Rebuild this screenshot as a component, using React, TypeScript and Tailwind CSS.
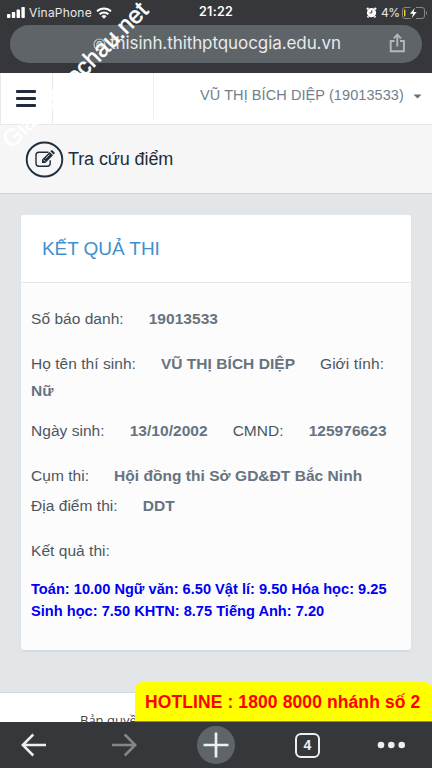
import type { ReactNode } from 'react'

const sans = "font-['Liberation_Sans',Arial,sans-serif]"

function Label({ children }: { children: ReactNode }) {
  return <span className="mr-[25px]">{children}</span>
}

function Value({ children }: { children: ReactNode }) {
  return <strong className="mr-[25px] font-bold text-[#67737f]">{children}</strong>
}

function StatusBar() {
  return (
    <div className="flex h-[25px] items-center pl-[7px] pr-[5px] text-[12px] text-[#e8eaed]">
      <div className="flex w-[192px] items-center">
        <svg width="18" height="11" viewBox="0 0 18 11" fill="#fff" aria-hidden="true">
          <rect x="0" y="7" width="3.4" height="4" rx=".8" />
          <rect x="4.8" y="5" width="3.4" height="6" rx=".8" />
          <rect x="9.6" y="2.5" width="3.4" height="8.5" rx=".8" />
          <rect x="14.4" y="0" width="3.4" height="11" rx=".8" />
        </svg>
        <span className="ml-1 w-[63px] whitespace-nowrap text-[12px] tracking-[0.2px]">VinaPhone</span>
        <svg className="ml-[4px]" width="16" height="12" viewBox="0 0 16 12" fill="none" stroke="#fff" strokeWidth="2" aria-hidden="true">
          <path d="M1 4.4a10 10 0 0 1 14 0M3.6 7.2a6.3 6.3 0 0 1 8.8 0" />
          <path d="M5.5 9.2a3.6 3.6 0 0 1 5 0L8 11.8z" fill="#fff" stroke="none" />
        </svg>
      </div>
      <span className="w-[36px] whitespace-nowrap text-[12.5px] font-semibold tracking-[0.3px] text-white">21:22</span>
      <div className="ml-auto flex items-center">
        <svg width="11" height="11" viewBox="0 0 11 11" aria-hidden="true">
          <circle cx="5.5" cy="5.7" r="4.6" fill="#fff" />
          <path d="M.8 2.3 2.5.8M10.2 2.3 8.5.8M2.5 9.3l-1 1.1M8.5 9.3l1 1.1" stroke="#fff" strokeWidth="1.8" />
          <path d="M5.8 3.2v2.7H3.6" fill="none" stroke="#36373b" strokeWidth="1" />
        </svg>
        <span className="ml-[4px] w-[21px] whitespace-nowrap text-[12px] tracking-[-0.4px]">4%</span>
        <svg width="25" height="12" viewBox="0 0 25 12" fill="none" aria-hidden="true">
          <path d="M8.5.5H3A2.5 2.5 0 0 0 .5 3v6A2.5 2.5 0 0 0 3 11.5h5.5M14 .5h6A2.5 2.5 0 0 1 22.5 3v6a2.5 2.5 0 0 1-2.5 2.5h-6" stroke="#85878a" />
          <rect x="2" y="2.5" width="1.4" height="7" rx=".7" fill="#f2d22e" />
          <path d="M12.8.8 8 6.8h3.1L9.7 11.200l5-6.200h-3.100z" fill="#fff" />
          <path d="M24 4v4a2.300 2.300 0 0 0 0-4" fill="#85878a" />
        </svg>
      </div>
    </div>
  )
}

function AddressBar() {
  return (
    <div className="mx-[10px] flex h-[38px] items-center rounded-full bg-[#5e6468] pl-[83px] pr-[16px]">
      <svg width="13" height="13" viewBox="0 0 13 13" fill="none" stroke="#c6c9cb" strokeWidth="1.2" aria-hidden="true">
        <circle cx="6.5" cy="6.5" r="5.5" />
        <path d="M4 5h5v4H4zM5 5V3.5h3V5" />
      </svg>
      <span className="ml-[4px] whitespace-nowrap text-[17px] tracking-[-0.08px] text-[#e8eaed]">thisinh.thithptquocgia.edu.vn</span>
      <svg className="ml-auto mb-[3px]" width="17" height="20" viewBox="0 0 17 20" fill="none" stroke="#b5b8ba" strokeWidth="1.9" aria-hidden="true">
        <path d="M5.5 8H1.7v10.2h13.2V8H11M8.3 13.5V1.8M4.7 5.3l3.6-3.6 3.6 3.6" />
      </svg>
    </div>
  )
}

function SiteHeader() {
  return (
    <div className="flex h-[52px] shrink-0 border-b border-[#e7e8e9] bg-white">
      <div className="flex w-[53px] flex-col justify-center gap-[4px] border-x border-[#e7e9eb] pl-[15px] pb-px">
        <span className="h-[3px] w-5 rounded-[1px] bg-[#1f2d3d]" />
        <span className="h-[3px] w-5 rounded-[1px] bg-[#1f2d3d]" />
        <span className="h-[3px] w-5 rounded-[1px] bg-[#1f2d3d]" />
      </div>
      <div className="h-[46px] w-[101px] border-r border-[#eeeff1]" />
      <div className="flex h-[46px] flex-1 items-center justify-end pr-[10px] text-[14.5px] text-[#727e8c]">
        <span className="mr-[8px] w-[205px] whitespace-nowrap tracking-[0.08px]">VŨ THỊ BÍCH DIỆP (19013533)</span>
        <svg width="9" height="5" viewBox="0 0 9 5" fill="#5f6f80" aria-hidden="true">
          <path d="M.5.5h8L4.5 4.5z" />
        </svg>
      </div>
    </div>
  )
}

function PageTitle() {
  return (
    <div className="flex h-[69px] shrink-0 items-center border-b border-[#d0d4d8] bg-[#f6f6f6] pl-[25px] text-[#1f2d3d]">
      <svg width="39" height="37" viewBox="0 0 39 37" fill="none" stroke="currentColor" aria-hidden="true">
        <ellipse cx="19.5" cy="18.5" rx="17.8" ry="17" strokeWidth="1.9" />
        <path d="M23.5 11.3h-9.500a3 3 0 0 0-3 3v7.900a3 3 0 0 0 3 3h8.200a3 3 0 0 0 3-3v-3" strokeWidth="1.4" />
        <path d="m17 18.500 7.600-7.600 3.400 3.400-7.600 7.600H17z" fill="currentColor" stroke="none" />
        <path d="m25.300 10.200.8-.8q.7-.6 1.400 0l1.900 1.900q.6.700 0 1.400l-.8.800z" fill="currentColor" stroke="none" />
        <path d="m18.500 18.700 1.700 1.700M20.500 17.500l4-4" stroke="#f6f6f6" strokeWidth=".8" />
      </svg>
      <h1 className="ml-[4px] whitespace-nowrap pt-px text-[18px] tracking-[-0.1px]">Tra cứu điểm</h1>
    </div>
  )
}

function ResultCard() {
  return (
    <section className="mx-[21px] mt-[21px] h-[435px] w-[390px] shrink-0 overflow-hidden rounded-[3px] bg-[#fcfcfc] shadow-[0_2px_2px_rgba(0,0,0,0.05)]">
      <h2 className="flex h-[68px] items-center border-b border-[#e5e7e8] bg-white pl-[21px] pt-px text-[19px] tracking-[-0.08px] text-[#428fce]">KẾT QUẢ THI</h2>
      <div className="whitespace-nowrap pl-[10px] pt-[21px] text-[15.5px] leading-[30px] tracking-[0.04px] text-[#4d565f]">
        <p><Label>Số báo danh:</Label><Value>19013533</Value></p>
        <p className="mt-[15px]"><Label>Họ tên thí sinh:</Label><Value>VŨ THỊ BÍCH DIỆP</Value>Giới tính:</p>
        <p className="-mt-[3px]"><Value>Nữ</Value></p>
        <p className="mt-[10px]"><Label>Ngày sinh:</Label><Value>13/10/2002</Value><Label>CMND:</Label><Value>125976623</Value></p>
        <p className="mt-[15px]"><Label>Cụm thi:</Label><Value>Hội đồng thi Sở GD&amp;ĐT Bắc Ninh</Value></p>
        <p><Label>Địa điểm thi:</Label><Value>DDT</Value></p>
        <p className="mt-[15px]">Kết quả thi:</p>
        <div className="mt-[12px] text-[14.6px] font-bold leading-[22px] tracking-[0.01px] text-[#0000f5]">
          <p>Toán: 10.00 Ngữ văn: 6.50 Vật lí: 9.50 Hóa học: 9.25</p>
          <p>Sinh học: 7.50 KHTN: 8.75 Tiếng Anh: 7.20</p>
        </div>
      </div>
    </section>
  )
}

function BrowserToolbar() {
  return (
    <nav className="flex h-[46px] shrink-0 items-center bg-[#36373b] text-[#eceef0]">
      <svg className="ml-[21px]" width="25" height="24" viewBox="0 0 25 24" fill="none" stroke="currentColor" strokeWidth="2.5" aria-hidden="true">
        <path d="M25 12H1.8M12.3 1.5 1.8 12l10.500 10.500" />
      </svg>
      <svg className="ml-[66px]" width="25" height="24" viewBox="0 0 25 24" fill="none" stroke="#85868a" strokeWidth="2.5" aria-hidden="true">
        <path d="M0 12h23.200M12.700 1.500 23.200 12 12.700 22.500" />
      </svg>
      <svg className="ml-[60px]" width="38" height="38" viewBox="0 0 38 38" aria-hidden="true">
        <circle cx="19" cy="19" r="19" fill="#5e6468" />
        <path d="M19 6.500v25M6.500 19h25" stroke="currentColor" strokeWidth="2.700" />
      </svg>
      <div className="ml-[60px] flex h-[25px] w-[25px] items-center justify-center rounded-[6px] border-2 border-current text-[14px] font-bold">4</div>
      <svg className="ml-[57px]" width="29" height="8" viewBox="0 0 29 8" fill="currentColor" aria-hidden="true">
        <circle cx="4" cy="4" r="3.300" />
        <circle cx="14.300" cy="4" r="3.300" />
        <circle cx="24.700" cy="4" r="3.300" />
      </svg>
    </nav>
  )
}

export default function App() {
  return (
    <div className={`relative flex h-[768px] w-[432px] flex-col overflow-hidden bg-[#e2e6e9] ${sans}`}>
      <header className="h-[73px] shrink-0 bg-[#36373b] font-[Inter,sans-serif]">
        <StatusBar />
        <AddressBar />
      </header>
      <SiteHeader />
      <PageTitle />
      <ResultCard />
      <div className="mt-auto h-[30px] shrink-0 overflow-hidden border-t border-[#d3d7e0] bg-white pl-[80px] pt-[17px] font-['Open_Sans',sans-serif] text-[13px] leading-[20px] text-[#444]">
        Bản quyền
      </div>
      <BrowserToolbar />
      <div className="absolute bottom-[46px] right-0 flex h-[40px] w-[297px] items-center whitespace-nowrap rounded-t-[8px] border-b border-[#96960c] bg-[#ff0] pl-[10px] pt-px text-[17.5px] font-bold tracking-[0.1px] text-[#f00]">
        HOTLINE : 1800 8000 nhánh số 2
      </div>
      {/* diagonal site watermark */}
      <div className="absolute left-[-35px] top-[60px] w-[220px] -rotate-[45deg] whitespace-nowrap text-center text-[24px] leading-[30px] text-white [-webkit-text-stroke:0.5px_white]">
        Giasubaochau.net
      </div>
    </div>
  )
}
